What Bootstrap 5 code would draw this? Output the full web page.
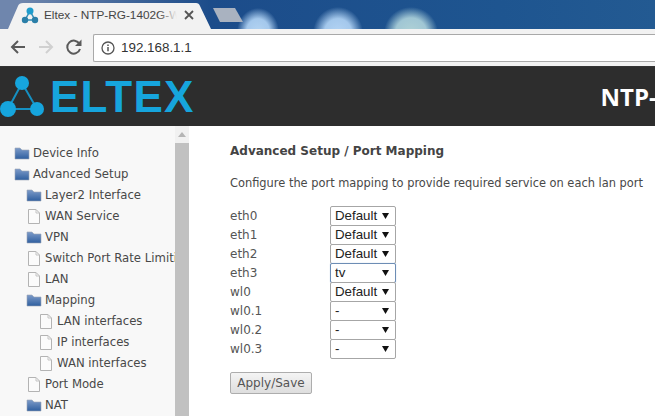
<!DOCTYPE html>
<html lang="en"><head><meta charset="utf-8"><title>Eltex</title>
<link href="https://cdn.jsdelivr.net/npm/bootstrap@5.3.0/dist/css/bootstrap.min.css" rel="stylesheet">
<style>
html,body{height:416px;overflow:hidden;background:#fff}
body{width:655px;font-family:"DejaVu Sans",sans-serif;font-size:12px;color:#484848}
.tabstrip{height:29px;overflow:hidden;
 background:
 radial-gradient(ellipse 21px 24px at 258px 32px,#b4d4f2 0,#a4c8ec 55%,rgba(120,165,215,0) 100%),
 radial-gradient(ellipse 25px 26px at 338px 33px,#b4d4f4 0,#a4c8ec 55%,rgba(120,165,215,0) 100%),
 radial-gradient(ellipse 27px 26px at 411px 33px,#b0d2d6 0,#a0c6d4 58%,rgba(120,170,200,0) 100%),
 linear-gradient(90deg,#6f86ad 0,#6f86ad 20px,#1c4c8a 210px,#1e5590 500px,#235a92 655px)}
.tabshape{width:250px;height:29px}
.toolrow{height:37px;background:#f2f2f2}
.omnibox{flex:1;height:28px;background:#fff;border:1px solid #a9a9a9;border-right:0;border-radius:2px 0 0 2px;font:13.4px "Liberation Sans",sans-serif;color:#333}
.infoicon{margin:0 6px 0 7px}
.darkhead{height:60px;background:#2d2d2d;border-top:1px solid #333;overflow:hidden;white-space:nowrap}
.logotext{font:bold 44px/1 "Liberation Sans",sans-serif;color:#16a5dd;letter-spacing:1.2px;margin-left:3px}
.prodname{font:bold 24px/1 "Open Sans","Liberation Sans",sans-serif;color:#fff;margin-left:406px}
.mainrow{height:290px;overflow:hidden}
.sidepane{width:175px;flex:none;background:#f8f8f8;padding-top:17px;overflow:hidden;white-space:nowrap;font-size:11.7px}
.treeitem{height:21px;line-height:21px;gap:3px;display:flex;align-items:center}
.lv0{padding-left:14px}.lv1{padding-left:26px}.lv2{padding-left:38px}
.treeitem svg{flex:none}
.sbar{width:14px;flex:none;background:#f1f1f1}
.sbarthumb{flex:1;background:#c1c1c1;margin-top:3px}
.sbararrow{height:14px;padding-top:6px}
.contentpane{flex:1;padding:16px 0 0 41px;min-width:0;white-space:nowrap}
.pagetitle{font-weight:bold;font-size:12px;line-height:19px;margin:0;color:#444}
.pageintro{margin:13px 0 0;line-height:19px;font-size:11.42px}
.maprows{margin-top:13px}
.maprow{height:19px;display:flex;align-items:center}
.maplabel{width:100px;font-size:12px;color:#555}
.mapsel{appearance:none;-webkit-appearance:none;width:66px;height:20px;margin:0;border:1px solid #a6a6a6;border-radius:2px;padding:0 0 0 4px;font:13.3px "Liberation Sans",sans-serif;color:#222;
 background:#fff url("data:image/svg+xml,%3Csvg xmlns='http://www.w3.org/2000/svg' width='7' height='6'%3E%3Cpath d='M0 0h7L3.5 6z' fill='%23111'/%3E%3C/svg%3E") no-repeat right 6px center}
.mapsel.focused{border-color:#6d8db5;box-shadow:0 0 1px #9db6d4}
.savebtn{margin-top:14px;height:22px;width:82px;padding:0;font:12px "DejaVu Sans",sans-serif;color:#555;background:linear-gradient(#f4f4f4,#dedede);border:1px solid #adadad;border-radius:2px}
</style></head>
<body>
<div class="tabstrip d-flex">
 <svg class="tabshape flex-shrink-0" viewBox="0 0 250 29">
  <path d="M8 29 L18 6 Q19 3 23 3 H196 Q199 3 200 6 L211 29 Z" fill="#f2f2f2"/>
  <path d="M213 8 H235 L243 22 H220 Z" fill="#a9b2c0"/>
  <path d="M30 11 L25 20 H35 Z" fill="none" stroke="#2f8fb8" stroke-width="1.5"/>
  <circle cx="30" cy="11" r="3.5" fill="#1f9ccc"/><circle cx="25" cy="20" r="3.2" fill="#2b7fa8"/><circle cx="35" cy="20" r="3.2" fill="#2b7fa8"/>
  <defs><linearGradient id="fadeT" gradientUnits="userSpaceOnUse" x1="44" x2="177" y1="0" y2="0"><stop offset=".86" stop-color="#444"/><stop offset="1" stop-color="#f2f2f2"/></linearGradient></defs>
  <text x="44" y="19" font-family="Liberation Sans" font-size="11.8" fill="url(#fadeT)">Eltex - NTP-RG-1402G-W</text>
  <path d="M185 11 L193 19 M193 11 L185 19" stroke="#555" stroke-width="1.8"/>
 </svg>
</div>
<div class="toolrow d-flex align-items-center">
 <svg width="93" height="37" viewBox="0 0 93 37" class="flex-shrink-0">
  <g fill="none" stroke-width="2"><path d="M25 18 H12 M18 12 L12 18 L18 24" stroke="#5a5a5a"/><path d="M39 18 H52 M46 12 L52 18 L46 24" stroke="#d0d0d0"/>
  <path d="M79.5 15 A6.5 6.5 0 1 0 80 20" stroke="#5a5a5a"/></g><path d="M81.5 10.5 V17 H75 Z" fill="#5a5a5a"/>
 </svg>
 <div class="omnibox d-flex align-items-center">
  <svg width="14" height="14" viewBox="0 0 14 14" class="infoicon flex-shrink-0"><circle cx="7" cy="7" r="6" fill="none" stroke="#555" stroke-width="1.3"/><path d="M7 6v4.3M7 3.4v1.5" stroke="#555" stroke-width="1.5"/></svg>
  <span>192.168.1.1</span>
 </div>
</div>
<header class="darkhead d-flex align-items-center">
 <svg width="47" height="44" viewBox="0 0 47 44" class="flex-shrink-0">
  <path d="M22 8 L8 34 H37 Z" fill="none" stroke="#1590c2" stroke-width="2"/>
  <circle cx="22" cy="8" r="7" fill="#16a5dd"/><circle cx="8" cy="34" r="8" fill="#16a5dd"/><circle cx="37" cy="34" r="7" fill="#16a5dd"/>
 </svg>
 <span class="logotext flex-shrink-0">ELTEX</span>
 <span class="prodname flex-shrink-0">NTP-RG-1402G-W</span>
</header>
<div class="mainrow d-flex">
 <nav class="sidepane">
  <div class="treeitem lv0"><svg width="16" height="13"><use href="#ifolder"/></svg>Device Info</div>
  <div class="treeitem lv0"><svg width="16" height="13"><use href="#ifolder"/></svg>Advanced Setup</div>
  <div class="treeitem lv1"><svg width="16" height="13"><use href="#ifolder"/></svg>Layer2 Interface</div>
  <div class="treeitem lv1"><svg width="16" height="15"><use href="#ipage"/></svg>WAN Service</div>
  <div class="treeitem lv1"><svg width="16" height="13"><use href="#ifolder"/></svg>VPN</div>
  <div class="treeitem lv1"><svg width="16" height="15"><use href="#ipage"/></svg>Switch Port Rate Limiting</div>
  <div class="treeitem lv1"><svg width="16" height="15"><use href="#ipage"/></svg>LAN</div>
  <div class="treeitem lv1"><svg width="16" height="13"><use href="#ifolder"/></svg>Mapping</div>
  <div class="treeitem lv2"><svg width="16" height="15"><use href="#ipage"/></svg>LAN interfaces</div>
  <div class="treeitem lv2"><svg width="16" height="15"><use href="#ipage"/></svg>IP interfaces</div>
  <div class="treeitem lv2"><svg width="16" height="15"><use href="#ipage"/></svg>WAN interfaces</div>
  <div class="treeitem lv1"><svg width="16" height="15"><use href="#ipage"/></svg>Port Mode</div>
  <div class="treeitem lv1"><svg width="16" height="13"><use href="#ifolder"/></svg>NAT</div>
 </nav>
 <div class="sbar d-flex flex-column">
  <div class="sbararrow d-flex justify-content-center"><svg width="8" height="5"><path d="M0 5 L4 0 L8 5Z" fill="#b5b5b5"/></svg></div>
  <div class="sbarthumb"></div>
 </div>
 <main class="contentpane">
  <h1 class="pagetitle">Advanced Setup / Port Mapping</h1>
  <p class="pageintro">Configure the port mapping to provide required service on each lan port</p>
  <div class="maprows">
   <div class="maprow"><span class="maplabel">eth0</span><select class="mapsel"><option>Default</option></select></div>
   <div class="maprow"><span class="maplabel">eth1</span><select class="mapsel"><option>Default</option></select></div>
   <div class="maprow"><span class="maplabel">eth2</span><select class="mapsel"><option>Default</option></select></div>
   <div class="maprow"><span class="maplabel">eth3</span><select class="mapsel focused"><option>tv</option></select></div>
   <div class="maprow"><span class="maplabel">wl0</span><select class="mapsel"><option>Default</option></select></div>
   <div class="maprow"><span class="maplabel">wl0.1</span><select class="mapsel"><option>-</option></select></div>
   <div class="maprow"><span class="maplabel">wl0.2</span><select class="mapsel"><option>-</option></select></div>
   <div class="maprow"><span class="maplabel">wl0.3</span><select class="mapsel"><option>-</option></select></div>
  </div>
  <button type="button" class="btn savebtn">Apply/Save</button>
 </main>
</div>
<svg width="0" height="0" class="d-block">
 <defs>
  <linearGradient id="fblue" x1="0" y1="0" x2="0" y2="1"><stop offset="0" stop-color="#7d9bc9"/><stop offset="1" stop-color="#2f5f9f"/></linearGradient>
  <symbol id="ifolder" viewBox="0 0 16 13"><path d="M1 1 H6 L8 3 H15 V12 H1 Z" fill="url(#fblue)" stroke="#9aa6b5" stroke-width=".6"/></symbol>
  <symbol id="ipage" viewBox="0 0 16 15"><path d="M2.5 .5 H10 L13.5 4 V14.5 H2.5 Z" fill="#fbfbfb" stroke="#b3b3b3"/><path d="M10 .5 V4 H13.5" fill="none" stroke="#c5c5c5"/></symbol>
 </defs>
</svg>
</body></html>
